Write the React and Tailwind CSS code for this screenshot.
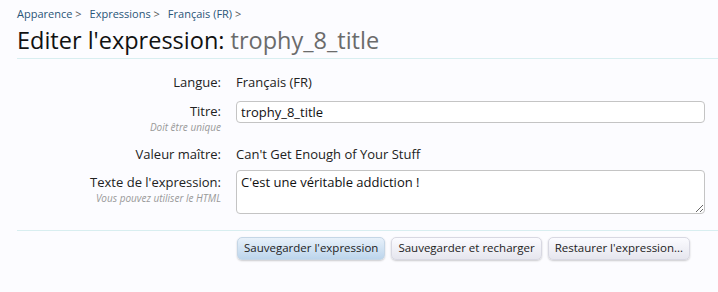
const font = { fontFamily: '"Open Sans", "DejaVu Sans", sans-serif' };

function Row({ label, hint, children, labelClass = "" }) {
  return (
    <div className="flex gap-[15px]">
      <div className={`w-[204px] shrink-0 text-right ${labelClass}`}>
        <div className="text-[13px] text-[#222]">{label}</div>
        {hint && (
          <div className="text-[10px] italic text-[#999] leading-[12px]">{hint}</div>
        )}
      </div>
      <div className="flex-1">{children}</div>
    </div>
  );
}

export default function App() {
  return (
    <div
      className="min-h-screen w-full bg-[#fcfcff] pl-[17px] pt-[6px]"
      style={{ fontFamily: '"Open Sans", "DejaVu Sans", sans-serif' }}
    >
      <nav className="flex gap-[8px] text-[11px] leading-[16px] text-[#2a5577]">
        <span>Apparence <span className="text-[#555]">&gt;</span></span>
        <span>Expressions <span className="text-[#555]">&gt;</span></span>
        <span>Français (FR) <span className="text-[#555]">&gt;</span></span>
      </nav>
      <h1 className="mt-[4px] text-[23.5px] leading-[28px] text-[#111]">
        Editer l'expression: <span className="text-[#6b6b6b]">trophy_8_title</span>
      </h1>
      <div className="mt-[4px] border-t border-[#d8eef0]" />

      <div className="flex flex-col pr-[13px]">
        <div className="mt-[14px]">
          <Row label="Langue:">
            <div className="text-[13px] text-[#222]">Français (FR)</div>
          </Row>
        </div>
        <div className="mt-[6px]">
          <Row label="Titre:" hint="Doit être unique" labelClass="pt-[3px]">
            <input
              readOnly
              value="trophy_8_title"
              className="h-[22px] w-full rounded-[4px] border border-[#c4c4c4] bg-white px-[4px] text-[13px] text-[#111] outline-none"
              style={font}
            />
          </Row>
        </div>
        <div className="mt-[12px]">
          <Row label="Valeur maître:">
            <div className="text-[13px] text-[#222]">Can't Get Enough of Your Stuff</div>
          </Row>
        </div>
        <div className="mt-[5px]">
          <Row label="Texte de l'expression:" hint="Vous pouvez utiliser le HTML" labelClass="pt-[3px]">
            <textarea
              readOnly
              value="C'est une véritable addiction !"
              className="block h-[44px] w-full rounded-[4px] border border-[#c4c4c4] bg-white px-[4px] py-[3px] text-[13px] leading-[17px] text-[#111] outline-none"
              style={font}
            />
          </Row>
        </div>
      </div>

      <div className="mt-[16px] border-t border-[#d8eef0]" />
      <div className="flex gap-[6px] pl-[220px] pt-[6px]">
        <button className="h-[23px] rounded-[5px] border border-[#c5d6e6] bg-gradient-to-b from-[#e8f1fa] to-[#bcd5ec] px-[6px] text-[11.5px] text-[#222] shadow-[0_1px_2px_rgba(0,0,0,0.2)]">
          Sauvegarder l'expression
        </button>
        <button className="h-[23px] rounded-[5px] border border-[#d8d8e2] bg-gradient-to-b from-[#fbfbff] to-[#e6e6ee] px-[6px] text-[11.5px] text-[#222] shadow-[0_1px_2px_rgba(0,0,0,0.2)]">
          Sauvegarder et recharger
        </button>
        <button className="h-[23px] rounded-[5px] border border-[#d8d8e2] bg-gradient-to-b from-[#fbfbff] to-[#e6e6ee] px-[6px] text-[11.5px] text-[#222] shadow-[0_1px_2px_rgba(0,0,0,0.2)]">
          Restaurer l'expression...
        </button>
      </div>
    </div>
  );
}
